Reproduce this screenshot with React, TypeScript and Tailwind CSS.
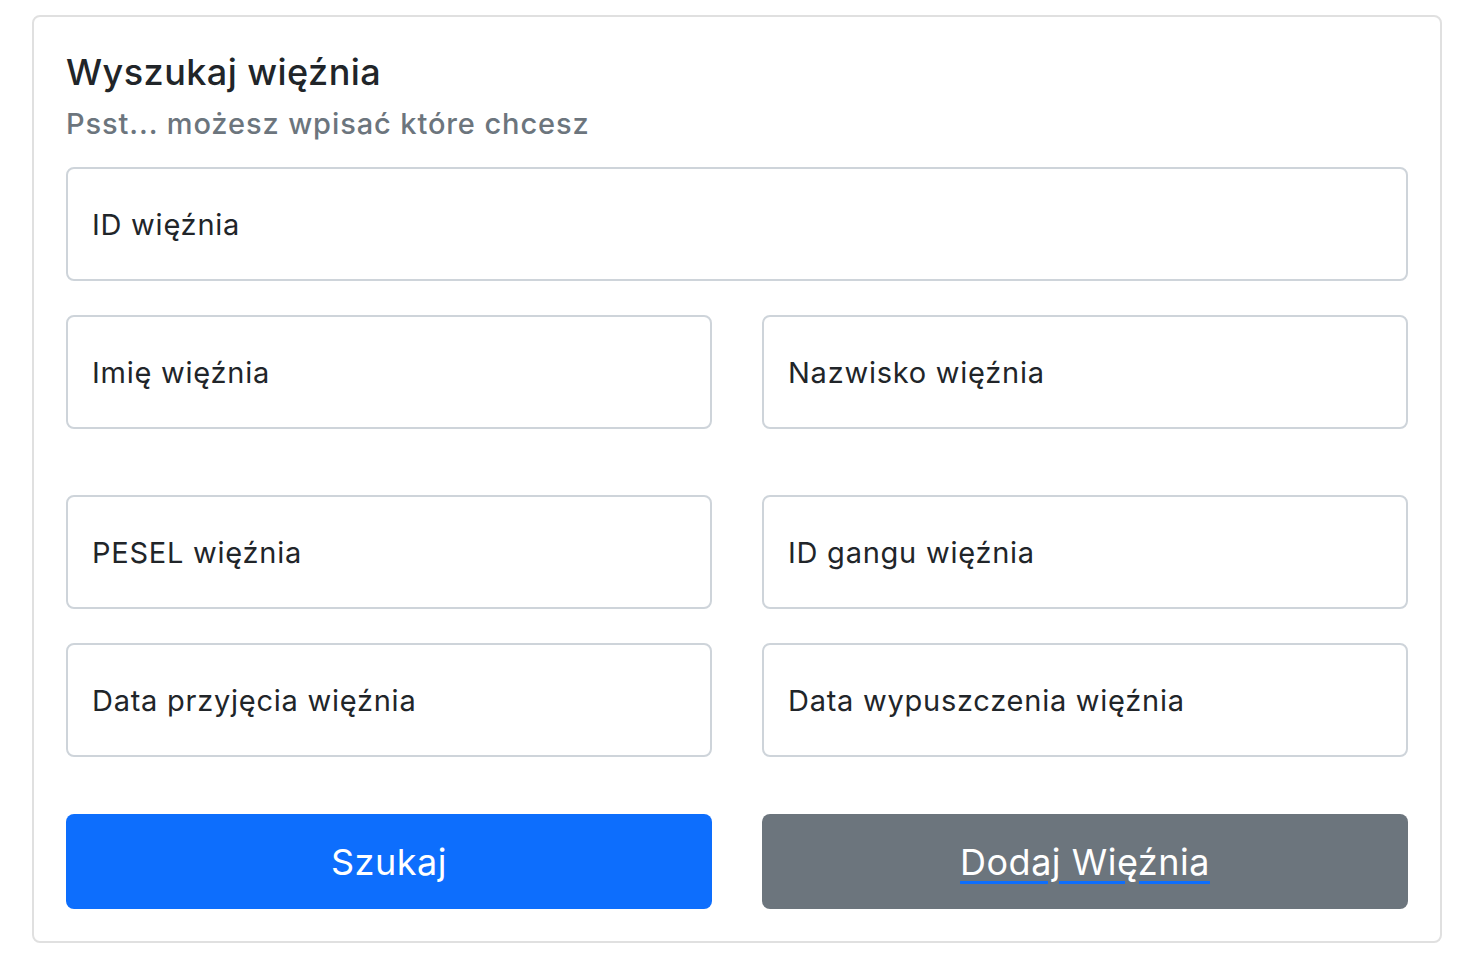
import React from 'react';

const Field = ({ placeholder }: { placeholder: string }) => (
  <input
    type="text"
    placeholder={placeholder}
    className="w-full h-[114px] px-[24px] border-2 border-[#ced4da] rounded-[8px] bg-white text-[29px] tracking-[0.75px] text-[#212529] placeholder:text-[#212529] outline-none"
  />
);

const App = () => {
  return (
    <div className="min-h-screen bg-white pt-[15px] pl-[32px]" style={{ fontFamily: 'Inter, "Liberation Sans", sans-serif' }}>
      <div className="w-[1410px] h-[928px] border-2 border-[#e0e0e0] rounded-[8px] px-[32px] pt-[33px]">
        <h5 className="text-[36px] leading-[44px] font-medium tracking-[0.45px] text-[#212529]">Wyszukaj więźnia</h5>
        <h6 className="mt-[12px] text-[29px] leading-[35px] font-medium tracking-[0.9px] text-[#6c757d]">Psst... możesz wpisać które chcesz</h6>

        <div className="mt-[26px]">
          <Field placeholder="ID więźnia" />
        </div>
        <div className="mt-[34px] grid grid-cols-2 gap-x-[50px]">
          <Field placeholder="Imię więźnia" />
          <Field placeholder="Nazwisko więźnia" />
        </div>
        <div className="mt-[66px] grid grid-cols-2 gap-x-[50px] gap-y-[34px]">
          <Field placeholder="PESEL więźnia" />
          <Field placeholder="ID gangu więźnia" />
          <Field placeholder="Data przyjęcia więźnia" />
          <Field placeholder="Data wypuszczenia więźnia" />
        </div>
        <div className="mt-[57px] grid grid-cols-2 gap-x-[50px]">
          <button className="h-[95px] rounded-[8px] bg-[#0d6efd] text-white text-[36px] tracking-[0.5px]">Szukaj</button>
          <button className="h-[95px] rounded-[8px] bg-[#6c757d] text-white text-[36px] tracking-[0.5px]">
            <a href="#" className="underline decoration-[#0d6efd] decoration-[3px] underline-offset-[6px]">Dodaj Więźnia</a>
          </button>
        </div>
      </div>
    </div>
  );
};

export default App;
